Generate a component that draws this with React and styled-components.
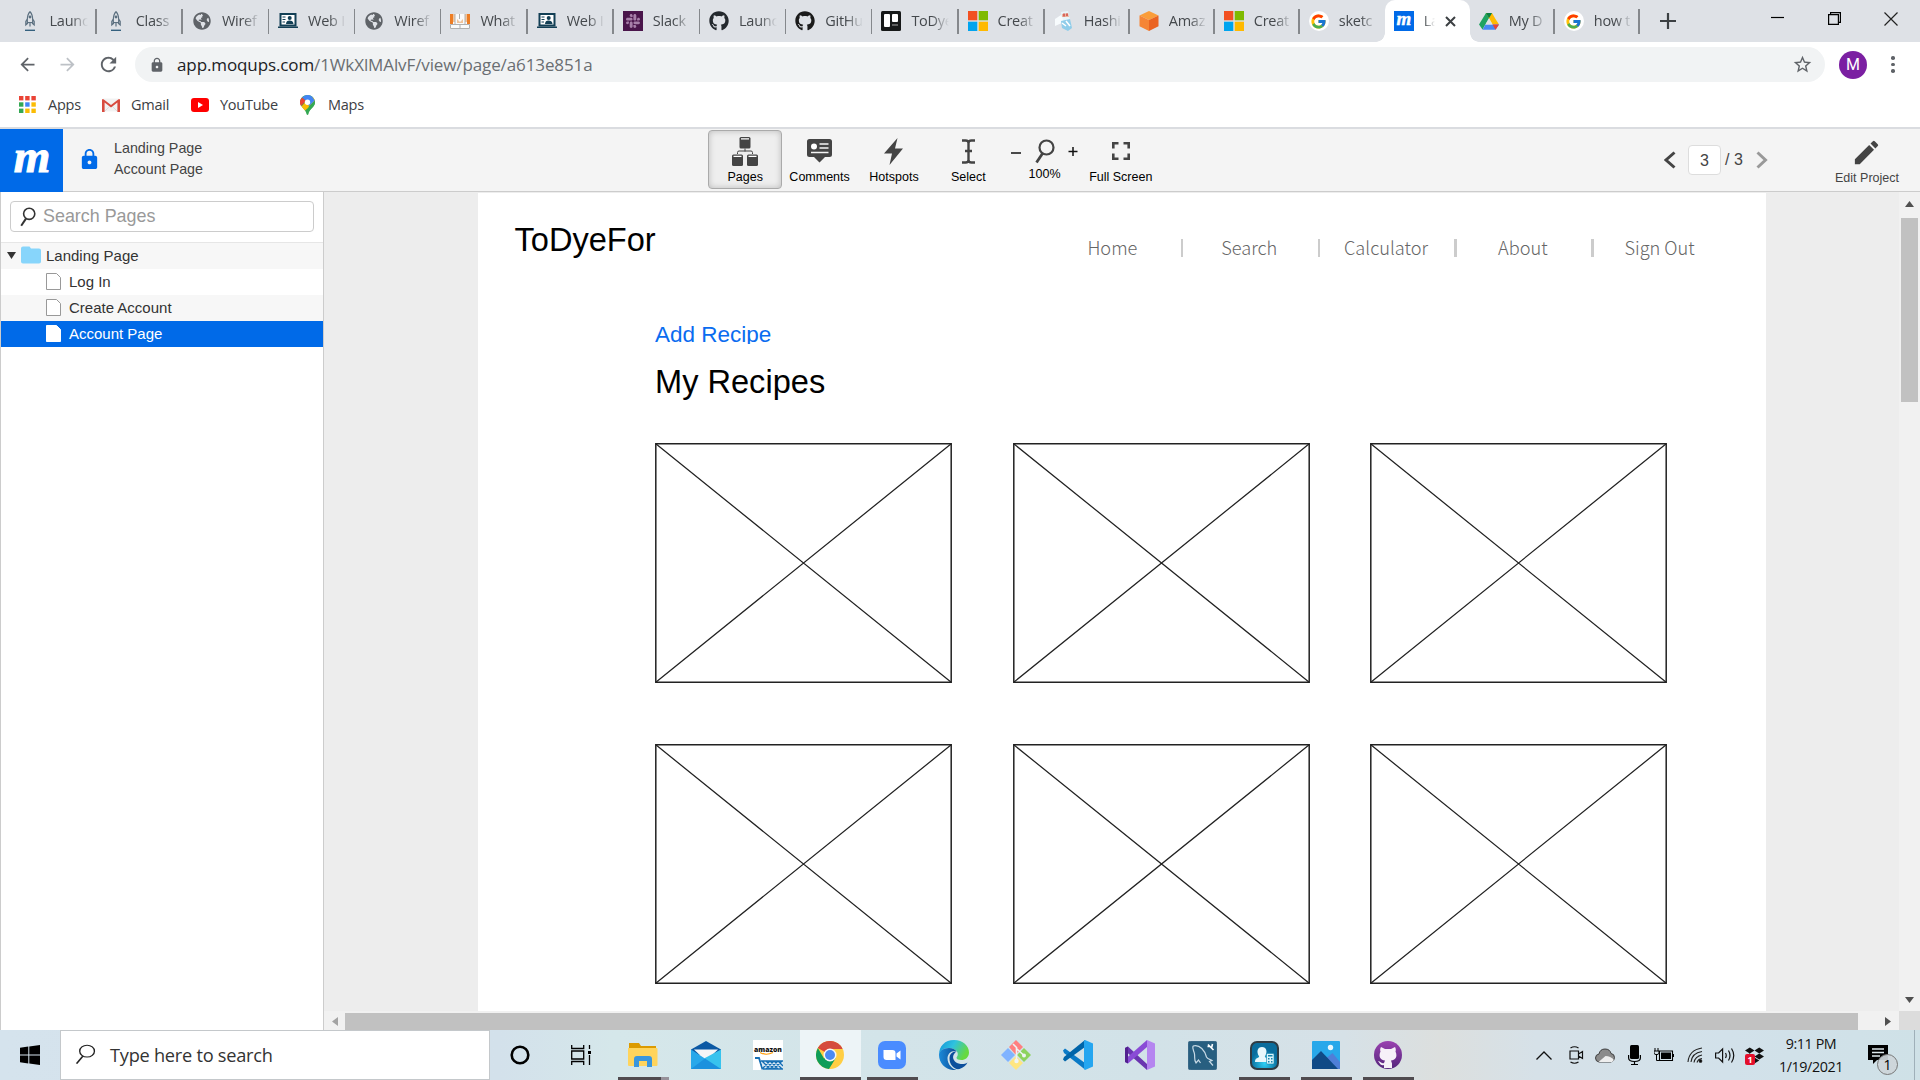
import React from 'react';
import styled, { createGlobalStyle, css } from 'styled-components';
import { FaGithub, FaSlack, FaDropbox, FaGlobeAmericas } from 'react-icons/fa';
import { FcGoogle } from 'react-icons/fc';
import { MdLock, MdEdit, MdStarBorder, MdArrowBack, MdArrowForward, MdRefresh } from 'react-icons/md';

const Global = createGlobalStyle`
  * { box-sizing: border-box; }
  html, body { margin: 0; padding: 0; background: #fff; }
  body { width: 1920px; height: 1080px; overflow: hidden; }
  svg { display: block; flex: none; }
`;

const ui = '"Open Sans", "Noto Sans", sans-serif';
const arial = '"Liberation Sans", Arial, sans-serif';
const blue = '#006ae8';

const Screen = styled.div`
  display: flex;
  flex-direction: column;
  width: 1920px;
  height: 1080px;
  overflow: hidden;
  font-family: ${arial};
`;

/* ---------- browser chrome ---------- */

const TabStrip = styled.div`
  display: flex;
  height: 42px;
  flex: none;
  padding-left: 10.5px;
  background: #dee1e6;
`;

const TabBox = styled.div`
  position: relative;
  display: flex;
  align-items: center;
  flex: none;
  width: ${(p) => p.$w}px;
  height: 42px;
  padding-left: 9px;
  font: 14.5px/20px ${ui};
  letter-spacing: -0.25px;
  color: #45494d;
  ${(p) => p.$active && css`
    background: #fff;
    border-radius: 10px 10px 0 0;
    &::before, &::after {
      content: '';
      position: absolute;
      bottom: 0;
      width: 9px;
      height: 9px;
    }
    &::before { left: -9px; background: radial-gradient(circle at 0 0, transparent 8.5px, #fff 9px); }
    &::after { right: -9px; background: radial-gradient(circle at 100% 0, transparent 8.5px, #fff 9px); }
  `}
`;

const TabIcon = styled.span`
  display: flex;
  align-items: center;
  justify-content: center;
  width: 20px;
  height: 20px;
  flex: none;
`;

const TabTitle = styled.span`
  width: ${(p) => (p.$active ? 11 : 38)}px;
  margin-left: 10px;
  white-space: nowrap;
  mask-image: linear-gradient(90deg, #000 ${(p) => (p.$active ? 0 : 55)}%, transparent 100%);
`;

const TabSeparator = styled.i`
  width: 1.5px;
  height: 25px;
  margin-left: auto;
  background: #85888c;
`;

const TabClose = styled.span`
  margin-left: 10px;
`;

const GoogleDisc = styled.span`
  display: flex;
  align-items: center;
  justify-content: center;
  width: 20px;
  height: 20px;
  border-radius: 50%;
  background: #fff;
`;

const NewTab = styled.div`
  display: flex;
  align-items: center;
  width: 56px;
  padding-left: 20px;
`;

const WindowButtons = styled.div`
  display: flex;
  align-items: center;
  height: 37px;
  margin-left: auto;
  padding-right: 22px;
  gap: 43.5px;
`;

const AddressRow = styled.div`
  display: flex;
  align-items: center;
  height: 45px;
  flex: none;
  background: #fff;
  padding-left: 17px;
`;

const NavIcons = styled.div`
  display: flex;
  align-items: center;
  gap: 19px;
  width: 118px;
  color: #5f6368;
`;

const Omnibox = styled.div`
  display: flex;
  align-items: center;
  width: 1690px;
  height: 35px;
  padding: 0 12px 0 14px;
  border-radius: 18px;
  background: #f1f3f4;
  color: #5f6368;
  font: 17px/24px ${ui};
  letter-spacing: -0.11px;
`;

const Url = styled.span`
  margin-left: 12px;
  margin-top: 1px;
  flex: 1;
  color: #6a6e72;
  b { font-weight: 400; color: #202124; }
`;

const Avatar = styled.div`
  width: 28px;
  height: 28px;
  margin-left: 14px;
  border-radius: 50%;
  background: #7b1fa2;
  color: #fff;
  font: 16px/28px Roboto, sans-serif;
  text-align: center;
`;

const Dots = styled.div`
  display: grid;
  gap: 3px;
  margin-left: 24px;
  i { width: 3.5px; height: 3.5px; border-radius: 50%; background: #5f6368; }
`;

const Bookmarks = styled.div`
  display: flex;
  align-items: center;
  height: 42px;
  flex: none;
  padding: 0 0 5px 19px;
  border-bottom: 2px solid #dadce0;
  background: #fff;
`;

const Bookmark = styled.div`
  display: flex;
  align-items: center;
  width: ${(p) => p.$w}px;
  gap: ${(p) => p.$gap}px;
  font: 14.5px/20px ${ui};
  letter-spacing: -0.25px;
  color: #3c4043;
`;

/* ---------- viewer toolbar ---------- */

const Toolbar = styled.header`
  display: flex;
  height: 63px;
  flex: none;
  background: #f4f4f4;
  border-bottom: 1px solid #ccc;
  color: #444;
`;

const Logo = styled.div`
  width: 63px;
  height: 63px;
  flex: none;
  background: ${blue};
  color: #fff;
  text-align: center;
  font: italic bold 47px/54px "Liberation Serif", serif;
  -webkit-text-stroke: 1px #fff;
  letter-spacing: -1px;
`;

const MiniLogo = styled.span`
  width: 20px;
  height: 20px;
  background: ${blue};
  color: #fff;
  text-align: center;
  font: italic bold 19px/16px "Liberation Serif", serif;
  -webkit-text-stroke: 0.4px #fff;
`;

const Crumbs = styled.div`
  display: flex;
  align-items: center;
  width: 645px;
  padding-left: 15px;
  gap: 13px;
  padding-bottom: 2px;
  font-size: 14.3px;
  line-height: 21px;
  color: #444;
  svg { color: ${blue}; margin-top: 1px; }
`;

const Tools = styled.div`
  display: flex;
  padding-top: 1px;
`;

const Tool = styled.div`
  display: flex;
  flex-direction: column;
  align-items: center;
  width: ${(p) => p.$w || 74.4}px;
  height: 59px;
  border: 1px solid transparent;
  border-radius: 4px;
  color: #444;
  ${(p) => p.$active && css`
    border-color: #aaa;
    background: #eee;
    box-shadow: inset 0 0 6px rgba(0, 0, 0, 0.22);
  `}
`;

const ToolIcon = styled.span`
  display: flex;
  align-items: center;
  justify-content: center;
  gap: ${(p) => p.$gap || 0}px;
  height: 39px;
  padding-top: 1px;
`;

const ToolLabel = styled.span`
  font-size: 12.5px;
  line-height: 14px;
  margin-top: ${(p) => p.$top || 0}px;
  color: ${(p) => p.$color || '#000'};
  white-space: nowrap;
`;

const Pager = styled.div`
  display: flex;
  align-items: center;
  margin-left: auto;
  width: 104px;
  font-size: 16px;
  color: #444;
`;

const PageField = styled.div`
  width: 33px;
  height: 30px;
  margin: 0 4px 0 12px;
  border: 1px solid #ddd;
  border-radius: 4px;
  background: #fff;
  text-align: center;
  line-height: 29px;
`;

const PageTotal = styled.span`
  width: 31px;
`;

const EditBox = styled.div`
  width: 106px;
  margin-left: 46px;
  padding-top: 2px;
  display: flex;
  justify-content: center;
`;

/* ---------- body ---------- */

const Body = styled.div`
  display: flex;
  height: 838px;
  flex: none;
`;

const Sidebar = styled.aside`
  width: 324px;
  flex: none;
  background: #fff;
  border: solid #ccc;
  border-width: 0 1px;
`;

const SearchWrap = styled.div`
  height: 50.5px;
  padding: 9px 9px 0;
  border-bottom: 1px solid #e6e6e6;
`;

const SearchField = styled.div`
  display: flex;
  align-items: center;
  width: 304px;
  height: 31px;
  border: 1px solid #ccc;
  border-radius: 4px;
  padding-left: 9px;
  gap: 7px;
  font-size: 17.9px;
  color: #999;
`;

const TreeRow = styled.div`
  display: flex;
  align-items: center;
  height: 26px;
  padding-left: ${(p) => (p.$child ? 45 : 6)}px;
  padding-bottom: 1px;
  gap: ${(p) => (p.$child ? 8 : 5)}px;
  font-size: 15px;
  color: ${(p) => (p.$selected ? '#fff' : '#333')};
  background: ${(p) => (p.$selected ? blue : p.$odd ? '#f7f7f7' : '#fff')};
`;

const Viewer = styled.div`
  display: grid;
  grid-template-columns: 1575px 21px;
  grid-template-rows: 819px 19px;
  flex: 1;
`;

const Canvas = styled.main`
  background: #ededed;
  padding: 1px 0 0 154px;
  overflow: hidden;
`;

const Page = styled.div`
  width: 1288px;
  height: 818px;
  background: #fff;
  overflow: hidden;
`;

const PageHeader = styled.div`
  display: flex;
  height: 128px;
  padding-left: 36.5px;
`;

const Brand = styled.h1`
  width: 532px;
  margin: 28px 0 0;
  font-size: 32.6px;
  font-weight: 400;
  line-height: 38px;
  color: #000;
`;

const SiteNav = styled.nav`
  display: flex;
  align-items: center;
  height: 18px;
  margin-top: 46px;
`;

const NavLink = styled.span`
  width: 134.3px;
  padding: 0 2.5px 2px 0;
  text-align: center;
  font: 300 18.2px/24px "Noto Sans CJK JP", "Noto Sans CJK SC", sans-serif;
  color: #666;
`;

const NavRule = styled.i`
  width: 2.5px;
  height: 18px;
  background: #ccc;
`;

const Recipes = styled.section`
  padding-left: 177px;
`;

const AddRecipe = styled.div`
  height: 22.5px;
  overflow: hidden;
  font-size: 22.5px;
  line-height: 28px;
  color: #0a6cf0;
`;

const Title = styled.h2`
  margin: 19px 0 42.5px;
  font-size: 32.6px;
  font-weight: 400;
  line-height: 38px;
  color: #000;
`;

const Grid = styled.div`
  display: grid;
  grid-template-columns: repeat(3, 297px);
  gap: 61px 60.5px;
`;

const BarV = styled.div`
  display: flex;
  flex-direction: column;
  align-items: center;
  background: #f1f1f1;
  padding: 9px 0 8px;
`;

const ThumbV = styled.div`
  width: 17px;
  height: 184px;
  margin: 11px 0 auto;
  background: #c1c1c1;
`;

const BarH = styled.div`
  display: flex;
  align-items: center;
  padding: 2px 8px 0;
  background: #f1f1f1;
`;

const ThumbH = styled.div`
  width: 1513px;
  height: 17px;
  margin: 0 auto 0 7px;
  background: #c1c1c1;
`;

const Corner = styled.div`
  background: #dcdcdc;
`;

/* ---------- taskbar ---------- */

const Taskbar = styled.footer`
  display: flex;
  height: 50px;
  flex: none;
  background: linear-gradient(90deg, #d5e3ed 0, #d3e1eb 26%, #d5e7ea 32%, #d3e4e9 46%, #d2e2e8 60%, #d6e1e7 70%, #dcdfde 75%, #d6e1e8 80%, #d2e1ea 90%, #cfe1e7 100%);
`;

const Start = styled.div`
  display: flex;
  align-items: center;
  justify-content: center;
  width: 60px;
`;

const TaskSearch = styled.div`
  display: flex;
  align-items: center;
  width: 430px;
  border: 1px solid #c4c8cb;
  background: #fff;
  padding: 0 0 1px 14px;
  gap: 14px;
  font: 18.2px/26px ${ui};
  letter-spacing: -0.25px;
  color: #333;
`;

const TaskItem = styled.div`
  display: flex;
  align-items: center;
  justify-content: center;
  width: ${(p) => p.$w || 62}px;
  height: 50px;
`;

const TaskFace = styled.div`
  display: flex;
  align-items: center;
  justify-content: center;
  width: ${(p) => (p.$active ? 61 : 51)}px;
  height: 50px;
  padding-top: 3px;
  background: ${(p) => (p.$active ? '#edf4f7' : 'transparent')};
  border-bottom: 3px solid ${(p) => (p.$running ? '#504b4f' : 'transparent')};
  ${(p) => p.$stacked && css`
    border-image: linear-gradient(90deg, #504b4f 80%, #97929a 80%) 3;
    border-width: 0 0 3px;
  `}
`;

const Tray = styled.div`
  display: flex;
  align-items: center;
  margin-left: auto;
  padding-right: 5px;
`;

const TrayIcon = styled.span`
  position: relative;
  display: flex;
  align-items: center;
  justify-content: center;
  width: ${(p) => p.$w || 30}px;
  height: 50px;
  padding: ${(p) => p.$pad || 0};
`;

const DropCount = styled.span`
  position: absolute;
  left: 6px;
  top: 24px;
  width: 10px;
  height: 11px;
  border-radius: 2px;
  background: #e3102c;
  color: #fff;
  font: bold 9px/11px ${ui};
  text-align: center;
`;

const Clock = styled.div`
  width: 84px;
  margin-right: 5px;
  text-align: center;
  font: 14.3px/23px ${ui};
  letter-spacing: -0.4px;
  color: #111;
  padding-bottom: 1px;
`;

const NoticeCount = styled.span`
  position: absolute;
  left: 19px;
  top: 24px;
  width: 21px;
  height: 21px;
  border: 1px solid #777;
  border-radius: 50%;
  background: rgba(205, 213, 217, 0.92);
  color: #000;
  font: 14px/19px ${ui};
  text-align: center;
`;

const ShowDesktop = styled.i`
  width: 1px;
  height: 50px;
  background: #9fb0b9;
`;

/* ---------- drawings ---------- */

const Rocket = () => (
  <svg width="12" height="20" viewBox="0 0 12 20">
    <path d="M6 .7C3.600 3 3 6 3.400 11.500h5.200C9 6 8.400 3 6 .7zM3.300 8 1.800 10.500v3.500l2.200-2M8.700 8l1.500 2.500v3.500l-2.200-2M6 11v4.500" fill="none" stroke="#5c7080" strokeWidth="1.200" />
    <circle cx="6" cy="6" r="1.400" fill="#5c7080" />
    <path d="M1 19.300h10" stroke="#35617f" strokeWidth="1.400" />
  </svg>
);
const WebCourse = () => (
  <svg width="20" height="16" viewBox="0 0 20 16">
    <path d="M2.500 1h15v11.500h-15z" fill="#fff" stroke="#123f55" strokeWidth="2" />
    <path d="M0 13.500h20V15H0zM8 11c0-2.500 1.500-3.500 3.500-3.500S15.500 8.500 15.500 11z" fill="#123f55" />
    <circle cx="11.700" cy="5" r="2" fill="#123f55" />
    <path d="M4.500 4h3M4.500 6.500h3M4.500 9h2.500" stroke="#123f55" strokeWidth="1.200" />
  </svg>
);
const Building = () => (
  <svg width="20" height="15" viewBox="0 0 20 15">
    <path d="M0 0h20v15H0z" fill="#fafafa" />
    <path d="M0 0h3v10H0zM17 0h3v10h-3z" fill="#ed7d24" />
    <path d="M3 0h2v8H3zM7 5l3 3 3-3v4H7zM15 0h2v8h-2z" fill="#f0c49c" />
    <path d="M.5 10.500h19v4H.5zM10 10v5M5 0v10M9.500 0v5M15 0v10" fill="none" stroke="#b0b0b0" />
  </svg>
);
const SlackTile = styled.span`
  display: flex;
  align-items: center;
  justify-content: center;
  width: 20px;
  height: 20px;
  background: #4a154b;
  color: #a77fa9;
`;
const Trello = () => (
  <svg width="20" height="20" viewBox="0 0 20 20">
    <rect width="20" height="20" rx="1.500" fill="#161818" />
    <rect x="3" y="3" width="6" height="13" rx="1" fill="#fff" />
    <rect x="11" y="3" width="6" height="8" rx="1" fill="#fff" />
    <path d="M11 14h6" stroke="#777" strokeWidth="1.500" />
  </svg>
);
const Microsoft = () => (
  <svg width="20" height="20" viewBox="0 0 20 20">
    <path d="M0 0h9.300v9.300H0z" fill="#f25022" />
    <path d="M10.700 0H20v9.300h-9.300z" fill="#7fba00" />
    <path d="M0 10.700h9.300V20H0z" fill="#00a4ef" />
    <path d="M10.700 10.700H20V20h-9.300z" fill="#ffb900" />
  </svg>
);
const Wizard = () => (
  <svg width="20" height="20" viewBox="0 0 20 20">
    <path d="M7 1l7-1 2 9-8 1z" fill="#e8f5fb" />
    <path d="M8 3l6-1 1 4H8z" fill="#eab59f" />
    <path d="M10 2.500v3M13 2.500v2.500" stroke="#c33" strokeWidth="1.200" />
    <path d="M1 8l6-4 3 7-9 4z" fill="#f7fbfd" />
    <path d="M7 10l9-2 2 9-4 3-6-3z" fill="#8fcdea" />
    <path d="M8 12l4 3M12 10l4 5" stroke="#fff" strokeWidth="1.500" />
  </svg>
);
const Cube = () => (
  <svg width="20" height="20" viewBox="0 0 20 20">
    <path d="M10 0l9.500 4.500L10 9 .5 4.500z" fill="#fa9d3a" />
    <path d="M.5 4.500L10 9v11L.5 15.200z" fill="#f58536" />
    <path d="M19.500 4.500L10 9v11l9.500-4.800z" fill="#ea6322" />
  </svg>
);
const Drive = () => (
  <svg width="20" height="17" viewBox="0 0 20 17">
    <path d="M7 0h6l-3 5.300L3.500 16.500 0 11.500z" fill="#1ea362" />
    <path d="M7 0h6l3.500 6 3.500 5.500h-6.500z" fill="#ffba00" />
    <path d="M6.500 11.500H20l-3.500 5.300h-13z" fill="#4688f4" />
    <path d="M13.500 11.500H20l-3.500 5.300z" fill="#ea4335" />
    <path d="M7 0h6l-3 5.300z" fill="#0b8043" />
    <path d="M10 5.300l3.500 6.200h-7z" fill="#dee1e6" />
  </svg>
);
const Gmail = () => (
  <svg width="18" height="14" viewBox="0 0 18 14">
    <path d="M1 .5h16v13H1z" fill="#f2f2f2" />
    <path d="M2.500 13.500L9 7l6.500 6.500" fill="none" stroke="#ddd" />
    <path d="M0 1.200h1.500L9 7l7.500-5.800H18V14h-2.600V4.400L9 9.600 2.600 4.400V14H0z" fill="#d84b3f" />
  </svg>
);
const YouTube = () => (
  <svg width="18" height="14" viewBox="0 0 18 14">
    <rect width="18" height="14" rx="3" fill="#f00" />
    <path d="M7 4l5 3-5 3z" fill="#fff" />
  </svg>
);
const Pin = () => (
  <svg width="15" height="20" viewBox="0 0 15 20">
    <path d="M7.500 0C3.400 0 0 3.200 0 7.300 0 12 5.800 14 6.600 19.300q.9 1.400 1.800 0C9.200 14 15 12 15 7.300 15 3.200 11.600 0 7.500 0z" fill="#34a853" />
    <path d="M1.500 11.500L10.500 1Q15 3 15 7.300L5 15.500Q3 13.500 1.500 11.500z" fill="#fbbc04" />
    <path d="M9 11l5.700-5.500Q16 10 11 14L7 18z" fill="#34a853" />
    <path d="M2 2.500Q7-2 12 1.500l2.700 4L9 11 5 5z" fill="#4285f4" />
    <path d="M2 2.500L6 6 1 11Q-1.500 6.500 2 2.500z" fill="#ea4335" />
    <circle cx="7.500" cy="7.300" r="2.700" fill="#fff" />
  </svg>
);
const appColors = ['#ea4335', '#ea4335', '#ea4335', '#34a853', '#4285f4', '#fbbc04', '#34a853', '#fbbc04', '#fbbc04'];
const AppsGrid = () => (
  <svg width="17" height="17" viewBox="0 0 17 17">
    {appColors.map((c, i) => (
      <rect key={i} x={(i % 3) * 6.200} y={Math.floor(i / 3) * 6.300} width="4.400" height="4.400" fill={c} />
    ))}
  </svg>
);

const Glass = ({ w, h, stroke, sw }) => (
  <svg width={w} height={h} viewBox="0 0 20 25" preserveAspectRatio="none">
    <circle cx="11.500" cy="8.500" r="7" fill="none" stroke={stroke} strokeWidth={sw} />
    <path d="M7.500 14.500L1.500 23.500" stroke={stroke} strokeWidth={sw * 1.250} />
  </svg>
);
const PagesIcon = () => (
  <svg width="26" height="29" viewBox="0 0 26 29" fill="#444">
    <rect x="7.500" y="0" width="11" height="11.500" rx="1.500" />
    <rect x="0" y="17.500" width="11" height="11.500" rx="1.500" />
    <rect x="15" y="17.500" width="11" height="11.500" rx="1.500" />
    <path d="M9 1.800h8M1.500 19.300h8M16.500 19.300h8" stroke="#fff" strokeWidth="1.200" />
    <path d="M13 11.500v3M5.500 17v-1.500q0-1.500 1.500-1.500h12q1.500 0 1.500 1.500V17" fill="none" stroke="#444" strokeWidth="1" />
  </svg>
);
const CommentIcon = () => (
  <svg width="25" height="24" viewBox="0 0 25 24">
    <path d="M2.500 0h20Q25 0 25 2.500v13q0 2.500-2.500 2.500H18l-5.500 5.500L7 18H2.500Q0 18 0 15.500v-13Q0 0 2.500 0z" fill="#444" />
    <circle cx="7" cy="7.500" r="3" fill="#fff" />
    <path d="M12.500 5h9M12.500 9h9M4 13.500h17.500" stroke="#f4f4f4" strokeWidth="1.600" />
  </svg>
);
const BoltIcon = () => (
  <svg width="19" height="27" viewBox="0 0 19 27">
    <path d="M13.500 0L0 15.500h8L5.500 27 19 10.500h-8z" fill="#444" />
  </svg>
);
const CaretIcon = () => (
  <svg width="13" height="25" viewBox="0 0 13 25">
    <path d="M0 1.500h3.500Q6.500 1.500 6.500 4v17q0 2.500-3 2.500H0M13 1.500H9.500Q6.500 1.500 6.500 4M6.500 21q0 2.500 3 2.500H13M3 12h7" fill="none" stroke="#444" strokeWidth="2.400" />
  </svg>
);
const FullIcon = () => (
  <svg width="18" height="18" viewBox="0 0 18 18">
    <path d="M1.300 6.500V1.300h5.200M11.500 1.300h5.200v5.200M16.700 11.500v5.200h-5.200M6.500 16.700H1.300v-5.200" fill="none" stroke="#444" strokeWidth="2.600" />
  </svg>
);
const Sign = ({ plus }) => (
  <svg width="10" height="13" viewBox="0 0 10 13">
    <path d={plus ? 'M.5 6.500h9M5 2v9' : 'M0 8h10'} stroke="#111" strokeWidth="1.500" />
  </svg>
);
const Chevron = ({ right }) => (
  <svg width="12" height="18" viewBox="0 0 12 18">
    <path d={right ? 'M1.500 1.500L9.500 9l-8 7.500' : 'M10.500 1.500L2 9l8.500 7.500'} fill="none" stroke={right ? '#999' : '#444'} strokeWidth="3" />
  </svg>
);
const Folder = () => (
  <svg width="20" height="18" viewBox="0 0 20 18">
    <path d="M2 .5h6.500L10 2.500h8q2 0 2 2v11q0 2-2 2H2q-2 0-2-2v-13q0-2 2-2z" fill="#87d5fb" />
  </svg>
);
const Sheet = ({ solid }) => (
  <svg width="15" height="17" viewBox="0 0 15 17">
    <path d="M.5.5h10l4 4v12H.5z" fill="#fff" stroke={solid ? '#fff' : '#999'} />
  </svg>
);
const Arrow = ({ d, w = 9, h = 6, color = '#505050' }) => (
  <svg width={w} height={h} viewBox={`0 0 ${w} ${h}`}><path d={d} fill={color} /></svg>
);
const Placeholder = () => (
  <svg width="297" height="240" viewBox="0 0 297 240">
    <path d="M.8.800h295.400v238.400H.8z" fill="none" stroke="#222" strokeWidth="1.500" />
    <path d="M.8.800l295.400 238.400M296.200.8L.8 239.200" fill="none" stroke="#222" strokeWidth="1.250" />
  </svg>
);

/* taskbar applications */
const Cortana = () => (
  <svg width="20" height="20" viewBox="0 0 20 20"><circle cx="10" cy="10" r="8.300" fill="none" stroke="#000" strokeWidth="2.600" /></svg>
);
const TaskView = () => (
  <svg width="20" height="20" viewBox="0 0 20 20" fill="none" stroke="#000" strokeWidth="1.300">
    <path d="M.7 0v3.500h12V0M.7 20v-3.500h12V20M.7 6h12v8H.7zM18.500 0v4M18.500 10v10" />
    <path d="M17 6h3v3h-3z" fill="#000" stroke="none" />
  </svg>
);
const Explorer = () => (
  <svg width="30" height="24" viewBox="0 0 30 24">
    <path d="M1 0h10l2 3h15v6H1z" fill="#dc9a00" />
    <path d="M0 5h28.500q1 0 1 1v16q0 1-1 1H1q-1 0-1-1z" fill="#ffd45c" />
    <path d="M6 24v-8q0-3 3-3h12q3 0 3 3v8h-5v-6h-8v6z" fill="#3a96dd" />
  </svg>
);
const Mail = () => (
  <svg width="30" height="28" viewBox="0 0 30 28">
    <path d="M0 8.500L15 0l15 8.500V14H0z" fill="#0c59a4" />
    <path d="M3 8.500h24L16 19h-2z" fill="#f4f6f7" />
    <path d="M0 8.500L30 28H0z" fill="#28a8ea" />
    <path d="M30 8.500L13 17.500 29 28h1z" fill="#37c3ee" />
    <path d="M0 28L14 17.500 30 28z" fill="#1b91de" />
  </svg>
);
const AmazonTile = () => (
  <svg width="30" height="30" viewBox="0 0 30 30">
    <path d="M0 0h30v30H0z" fill="#fff" />
    <text x="1" y="11.500" fontFamily="Open Sans, sans-serif" fontWeight="800" fontSize="7.600" textLength="28" lengthAdjust="spacingAndGlyphs" fill="#111">amazon</text>
    <path d="M7 12.500q6 3.500 13 0" fill="none" stroke="#f90" strokeWidth="1.200" />
    <path d="M2 18h4l3.500 11.500" fill="none" stroke="#146eb4" strokeWidth="1.800" />
    <path d="M8 21h22v8H10.500z" fill="#dbe9f4" />
    <path d="M9 21l8 8M13 21l8 8M17 21l8 8M21 21l8 8M25 21l5 5M29 21l-8 8M25 21l-8 8M21 21l-8 8M17 21l-7 7M8 21h22M10 29h20" stroke="#146eb4" strokeWidth="1.300" />
  </svg>
);
const Chrome = () => (
  <svg width="28" height="28" viewBox="0 0 28 28">
    <circle cx="14" cy="14" r="14" fill="#ffce44" />
    <path d="M14 14L1.880 7A14 14 0 0 1 26.120 7.500L14 7.500z" fill="#db4437" />
    <path d="M1.880 7A14 14 0 0 0 13 28l6.500-10.500L14 14 8 17.500z" fill="#0f9d58" />
    <path d="M1.880 7A14 14 0 0 1 26.600 8H14z" fill="#d54b3d" />
    <circle cx="14" cy="14" r="6.500" fill="#f4f7fa" />
    <circle cx="14" cy="14" r="5" fill="#4a8af4" />
  </svg>
);
const Zoom = () => (
  <svg width="28" height="28" viewBox="0 0 28 28">
    <rect width="28" height="28" rx="7" fill="#4a8cff" />
    <path d="M5.500 9h9q3 0 3 3v7h-9q-3 0-3-3zM18.500 12.500l4-3v9l-4-3z" fill="#fff" />
  </svg>
);
const Edge = () => (
  <svg width="30" height="30" viewBox="0 0 30 30">
    <defs>
      <linearGradient id="edgeTop" x1="0" x2="1" y1="0" y2=".4">
        <stop offset="0" stopColor="#1292d8" /><stop offset=".5" stopColor="#2fc2df" /><stop offset="1" stopColor="#67d93f" />
      </linearGradient>
      <linearGradient id="edgeLow" x1="0" x2="1"><stop offset="0" stopColor="#1b8ad8" /><stop offset="1" stopColor="#0c4a96" /></linearGradient>
    </defs>
    <path d="M0 15C0 6 6 0 15 0s15 6 15 12.500c0 5-4 7.500-7.500 7.500-3 0-5-1-5-2.300 0-.7 1.300-1.200 1.300-3.700C18.800 10.500 14 8 10 8 4 8 0 11.500 0 15z" fill="url(#edgeTop)" />
    <path d="M0 15c0-4 4-7 10-7 3.500 0 6 1.500 7.500 3.200-5-1-9 2.300-9 7.300 0 5.500 4.500 11 9.500 11.300C8 31.500 0 24 0 15z" fill="url(#edgeLow)" />
    <path d="M17.500 11.200c-4 0-7 3-7 7.300 0 6.500 5 11.500 10 10.500 4-1.200 6.800-4 8-6.500-2 1.300-5 2-8 1.300-5-1.300-7.500-5-6-8.800.8-2 3-3.300 3-3.800z" fill="#0c4f9c" />
  </svg>
);
const Git = () => (
  <svg width="30" height="30" viewBox="0 0 30 30">
    <path d="M15 0l7 7-7.500 7.500L8 7z" fill="#ff8080" />
    <path d="M7 8l7 7-7 7-7-7z" fill="#80b3ff" />
    <path d="M23 8l7 7-7 7-7-7z" fill="#8dd35f" />
    <path d="M15 16l7 7-7 7-7-7z" fill="#ffe680" />
    <path d="M12 4l4 4M15.500 8v13M16 9l7 6.500" stroke="#eef4f5" strokeWidth="1.600" />
    <circle cx="15.500" cy="21" r="2.200" fill="#eef4f5" /><circle cx="23" cy="15.500" r="2" fill="#eef4f5" />
  </svg>
);
const VSCode = () => (
  <svg width="30" height="30" viewBox="0 0 30 30">
    <path d="M0 10.500l2-2 20 14.500v6.500L1 13z" fill="#0a7ac6" />
    <path d="M0 19.500l2 2L22 7V0L1 17z" fill="#0065a9" />
    <path d="M22 0l8 3.500v23L22 30l-1-1V1z" fill="#25a6f0" />
  </svg>
);
const VisualStudio = () => (
  <svg width="30" height="30" viewBox="0 0 30 30">
    <path d="M0 8l3-1.500L22 24v6L1.500 12v7L0 22z" fill="#6a35b0" />
    <path d="M0 22l3 1.500L22 7V0L1.500 18z" fill="#8a4bd6" />
    <path d="M0 8l3-1.500V23.500L0 22z" fill="#52218f" />
    <path d="M22 0l8 3.500v23L22 30z" fill="#b585f0" />
  </svg>
);
const MySQL = () => (
  <svg width="29" height="29" viewBox="0 0 29 29">
    <rect width="29" height="29" rx="3" fill="#285f80" stroke="#4b7590" />
    <path d="M5 5c7-2 12 5 13.500 11 .8 2 4 2.500 5.500 3.500l-2.500 1 3.500 4M5 5c-1 3 1 5 1.500 8 .5 4-.5 6 1.500 9l2.500-3 2 3" fill="none" stroke="#c8dae5" strokeWidth="1.200" />
    <path d="M20 3.500l5.500 5.500M19.500 5.500l3 0M24.500 3l-1 4" stroke="#fff" strokeWidth="1.600" />
  </svg>
);
const Contact = () => (
  <svg width="29" height="29" viewBox="0 0 29 29">
    <defs><radialGradient id="contactFill" cy=".8"><stop offset="0" stopColor="#2ed0f5" /><stop offset="1" stopColor="#0a6d9d" /></radialGradient></defs>
    <rect x="1" y="1" width="27" height="27" rx="6" fill="url(#contactFill)" stroke="#303c44" strokeWidth="2" />
    <path d="M5 21c0-4.500 3.500-3.500 4.200-5.500C6 11 7.500 6 12 6s6 5 2.800 9.500c.7 2 3.200 1 3.200 5.500z" fill="#e9f8fc" />
    <rect x="16.500" y="12.500" width="7.500" height="10.500" rx="1" fill="#d9f4fb" stroke="#1684ad" strokeWidth=".6" />
    <path d="M18 14.700h4.500M18 17.700h1.500M21 17.700h1.500M18 20.700h1.500M21 20.700h1.500" stroke="#1684ad" strokeWidth="1.500" />
  </svg>
);
const Photos = () => (
  <svg width="28" height="28" viewBox="0 0 28 28">
    <rect width="28" height="28" rx="1" fill="#28a8ea" />
    <path d="M12 19l8.500-7 7.500 9v7H12z" fill="#4f7fd8" />
    <path d="M0 19L9 10l17 18H0z" fill="#104a86" />
    <circle cx="18.500" cy="6.500" r="2.700" fill="#e8f7fd" />
  </svg>
);
const GithubDisc = styled.span`
  display: flex;
  align-items: center;
  justify-content: center;
  width: 28px;
  height: 28px;
  border-radius: 50%;
  background: linear-gradient(#9a42b0, #54257c);
  color: #fff;
`;
const Octocat = () => (
  <svg width="24" height="26" viewBox="0 0 24 26">
    <path d="M5 5l4 2h6l4-2c1 2 1 3 .5 4.500C22 15 19 18 15 18.500l1 3V26H8v-3c-4 1-4-2-6-4 2 0 3 3 6 2l1-2.500C5 18 2 15 4.500 9.500 4 8 4 7 5 5z" fill="#f6f0f8" />
  </svg>
);

const Cloud = () => (
  <svg width="20" height="15" viewBox="0 0 20 15">
    <path d="M4 14q-3.500-.5-3.500-4T4 6q1-5 6-5t6 4.500q3.500.5 3.500 4T16 14z" fill="#8b8b8b" stroke="#333" strokeWidth=".9" />
    <path d="M3.500 14l7-6q5 0 8.500 4l-2 2z" fill="#eee" />
  </svg>
);

const google = <GoogleDisc><FcGoogle size={17} /></GoogleDisc>;
const globe = <FaGlobeAmericas size={18} color="#5f6368" />;
const tabs = [
  ['Launc', <Rocket />], ['Class', <Rocket />], ['Wiref', globe], ['Web I', <WebCourse />],
  ['Wiref', globe], ['What', <Building />], ['Web I', <WebCourse />],
  ['Slack', <SlackTile><FaSlack size={16} /></SlackTile>],
  ['Launc', <FaGithub size={20} color="#24292e" />], ['GitHu', <FaGithub size={20} color="#1b1b1b" />],
  ['ToDye', <Trello />], ['Creat', <Microsoft />], ['Hashi', <Wizard />], ['Amaz', <Cube />],
  ['Creat', <Microsoft />], ['sketc', google], ['La', <MiniLogo>m</MiniLogo>, true],
  ['My D', <Drive />], ['how t', google],
];

const apps = [
  { icon: <Explorer />, running: true, stacked: true }, { icon: <Mail /> }, { icon: <AmazonTile /> },
  { icon: <Chrome />, running: true, active: true }, { icon: <Zoom />, running: true },
  { icon: <Edge /> }, { icon: <Git /> }, { icon: <VSCode /> }, { icon: <VisualStudio /> },
  { icon: <MySQL /> }, { icon: <Contact />, running: true }, { icon: <Photos />, running: true },
  { icon: <GithubDisc><Octocat /></GithubDisc>, running: true },
];

const links = ['Home', 'Search', 'Calculator', 'About', 'Sign Out'];

export default function App() {
  return (
    <Screen>
      <Global />
      <TabStrip>
        {tabs.map(([title, icon, active], i) => (
          <TabBox key={i} $w={i < 12 ? 86.2 : 85} $active={active}>
            <TabIcon>{icon}</TabIcon>
            <TabTitle $active={active}>{title}</TabTitle>
            {active && (
              <TabClose>
                <svg width="11" height="11" viewBox="0 0 11 11"><path d="M1 1l9 9M10 1l-9 9" stroke="#3c4043" strokeWidth="2" /></svg>
              </TabClose>
            )}
            {!active && i !== 15 && <TabSeparator />}
          </TabBox>
        ))}
        <NewTab>
          <svg width="16" height="16" viewBox="0 0 16 16"><path d="M0 8h16M8 0v16" stroke="#3c4043" strokeWidth="2.200" /></svg>
        </NewTab>
        <WindowButtons>
          <svg width="13" height="13" viewBox="0 0 13 13"><path d="M0 5.500h13" stroke="#000" strokeWidth="1.200" /></svg>
          <svg width="13" height="13" viewBox="0 0 13 13"><path d="M.6 2.600h9.800v9.800H.6zM2.600 2.600v-2h9.800v9.800h-2" fill="none" stroke="#000" strokeWidth="1.200" /></svg>
          <svg width="14" height="14" viewBox="0 0 14 14"><path d="M.5.5l13 13M13.500.5l-13 13" stroke="#222" strokeWidth="1.200" /></svg>
        </WindowButtons>
      </TabStrip>
      <AddressRow>
        <NavIcons>
          <MdArrowBack size={21} />
          <MdArrowForward size={21} color="#bdc1c6" />
          <MdRefresh size={23} />
        </NavIcons>
        <Omnibox>
          <MdLock size={16} />
          <Url><b>app.moqups.com</b>/1WkXlMAlvF/view/page/a613e851a</Url>
          <MdStarBorder size={21} />
        </Omnibox>
        <Avatar>M</Avatar>
        <Dots><i /><i /><i /></Dots>
      </AddressRow>
      <Bookmarks>
        <Bookmark $w={83} $gap={12}><AppsGrid />Apps</Bookmark>
        <Bookmark $w={89} $gap={11}><Gmail />Gmail</Bookmark>
        <Bookmark $w={109} $gap={11}><YouTube />YouTube</Bookmark>
        <Bookmark $w={90} $gap={13}><Pin />Maps</Bookmark>
      </Bookmarks>

      <Toolbar>
        <Logo>m</Logo>
        <Crumbs>
          <MdLock size={23} />
          <div>Landing Page<br />Account Page</div>
        </Crumbs>
        <Tools>
          <Tool $active><ToolIcon><PagesIcon /></ToolIcon><ToolLabel>Pages</ToolLabel></Tool>
          <Tool><ToolIcon><CommentIcon /></ToolIcon><ToolLabel>Comments</ToolLabel></Tool>
          <Tool><ToolIcon><BoltIcon /></ToolIcon><ToolLabel>Hotspots</ToolLabel></Tool>
          <Tool><ToolIcon><CaretIcon /></ToolIcon><ToolLabel>Select</ToolLabel></Tool>
          <Tool $w={78}>
            <ToolIcon $gap={13.5}><Sign /><Glass w={20} h={25} stroke="#444" sw={2.200} /><Sign plus /></ToolIcon>
            <ToolLabel $top={-3}>100%</ToolLabel>
          </Tool>
          <Tool><ToolIcon><FullIcon /></ToolIcon><ToolLabel>Full Screen</ToolLabel></Tool>
        </Tools>
        <Pager>
          <Chevron />
          <PageField>3</PageField>
          <PageTotal>/ 3</PageTotal>
          <Chevron right />
        </Pager>
        <EditBox>
          <Tool><ToolIcon><MdEdit size={31} /></ToolIcon><ToolLabel $color="#444">Edit Project</ToolLabel></Tool>
        </EditBox>
      </Toolbar>

      <Body>
        <Sidebar>
          <SearchWrap>
            <SearchField><Glass w={16} h={20} stroke="#333" sw={2} />Search Pages</SearchField>
          </SearchWrap>
          <TreeRow $odd><Arrow w={9} h={7} d="M0 0h9L4.500 7z" color="#333" /><Folder />Landing Page</TreeRow>
          <TreeRow $child><Sheet />Log In</TreeRow>
          <TreeRow $child $odd><Sheet />Create Account</TreeRow>
          <TreeRow $child $selected><Sheet solid />Account Page</TreeRow>
        </Sidebar>
        <Viewer>
          <Canvas>
            <Page>
              <PageHeader>
                <Brand>ToDyeFor</Brand>
                <SiteNav>
                  {links.map((name, i) => (
                    <React.Fragment key={name}>
                      {i > 0 && <NavRule />}
                      <NavLink>{name}</NavLink>
                    </React.Fragment>
                  ))}
                </SiteNav>
              </PageHeader>
              <Recipes>
                <AddRecipe>Add Recipe</AddRecipe>
                <Title>My Recipes</Title>
                <Grid>
                  {[1, 2, 3, 4, 5, 6].map((n) => <Placeholder key={n} />)}
                </Grid>
              </Recipes>
            </Page>
          </Canvas>
          <BarV>
            <Arrow d="M0 6h9L4.500 0z" />
            <ThumbV />
            <Arrow d="M0 0h9L4.500 6z" />
          </BarV>
          <BarH>
            <Arrow w={6} h={9} d="M6 0v9L0 4.500z" color="#a3a3a3" />
            <ThumbH />
            <Arrow w={6} h={9} d="M0 0v9l6-4.500z" />
          </BarH>
          <Corner />
        </Viewer>
      </Body>

      <Taskbar>
        <Start>
          <svg width="20" height="20" viewBox="0 0 20 20"><path d="M0 2.800L8.300 1.600v8H0zM9.300 1.500L20 0v9.600H9.300zM0 10.500h8.300v8L0 17.300zM9.300 10.500H20V20L9.300 18.600z" /></svg>
        </Start>
        <TaskSearch><Glass w={21} h={21} stroke="#222" sw={1.300} />Type here to search</TaskSearch>
        <TaskItem $w={60}><Cortana /></TaskItem>
        <TaskItem $w={61}><TaskView /></TaskItem>
        {apps.map((a, i) => (
          <TaskItem key={i} $w={i === 0 ? 64 : 62}>
            <TaskFace $active={a.active} $running={a.running} $stacked={a.stacked}>{a.icon}</TaskFace>
          </TaskItem>
        ))}
        <Tray>
          <TrayIcon $w={32}><svg width="16" height="9" viewBox="0 0 16 9"><path d="M.5 8.500L8 1l7.500 7.500" fill="none" stroke="#111" strokeWidth="1.300" /></svg></TrayIcon>
          <TrayIcon $w={29} $pad="0 0 0 4px">
            <svg width="15" height="18" viewBox="0 0 15 18" fill="none" stroke="#111" strokeWidth="1.200"><path d="M1 5h8.500v8H1zM9.500 8l4-2.500v7l-4-2.500M1.500 2Q5.500-.5 9.500 2M1.500 16q4 2.500 8 0" /></svg>
          </TrayIcon>
          <TrayIcon $w={31}><Cloud /></TrayIcon>
          <TrayIcon $w={28}>
            <svg width="13" height="20" viewBox="0 0 13 20"><rect x="2" width="9" height="14" rx="1.500" /><path d="M.6 10v3q0 3.500 5.900 3.500T12.400 13v-3M6.500 16v3.500M3 19.500h7" fill="none" stroke="#000" strokeWidth="1.200" /></svg>
          </TrayIcon>
          <TrayIcon $w={31}>
            <svg width="20" height="14" viewBox="0 0 20 14"><path d="M5.500 3h13v9.500h-13z" fill="none" stroke="#000" strokeWidth="1.100" /><path d="M7 4.500h10v6.500H7zM18.500 6H20v3h-1.500z" /><path d="M1 0v3M4 0v3M0 3h5v2.500L2.500 7 0 5.500zM2.500 6v6.500H6" fill="none" stroke="#000" /></svg>
          </TrayIcon>
          <TrayIcon $w={31}>
            <svg width="16" height="16" viewBox="0 0 16 16" fill="none" stroke="#222" strokeWidth="1.100"><path d="M1 15Q2 3 15 1M4 15Q5 6 15 4.500M7 15.500Q8 9.500 15 8M10 15.500q1-3.500 5-4" /><circle cx="13.500" cy="14" r="1.300" fill="#000" /></svg>
          </TrayIcon>
          <TrayIcon $w={29}>
            <svg width="20" height="17" viewBox="0 0 20 17" fill="none" stroke="#111" strokeWidth="1.200"><path d="M.6 6h3l4-4v13l-4-4h-3zM10.500 6q1.500 2.500 0 5M13.500 3.500q3 5 0 10M16.500 1.500q4.500 7 0 14" /></svg>
          </TrayIcon>
          <TrayIcon $w={30}><FaDropbox size={19} color="#111" /><DropCount>1</DropCount></TrayIcon>
          <Clock>9:11 PM<br />1/19/2021</Clock>
          <TrayIcon $w={56} $pad="0 16px 2px 0">
            <svg width="20" height="19" viewBox="0 0 20 19"><path d="M0 0h20v15H9l-4 4v-4H0z" /><path d="M4 4h12M4 7.500h12M4 11h8" stroke="#dde8ec" strokeWidth="1.300" /></svg>
            <NoticeCount>1</NoticeCount>
          </TrayIcon>
          <ShowDesktop />
        </Tray>
      </Taskbar>
    </Screen>
  );
}
